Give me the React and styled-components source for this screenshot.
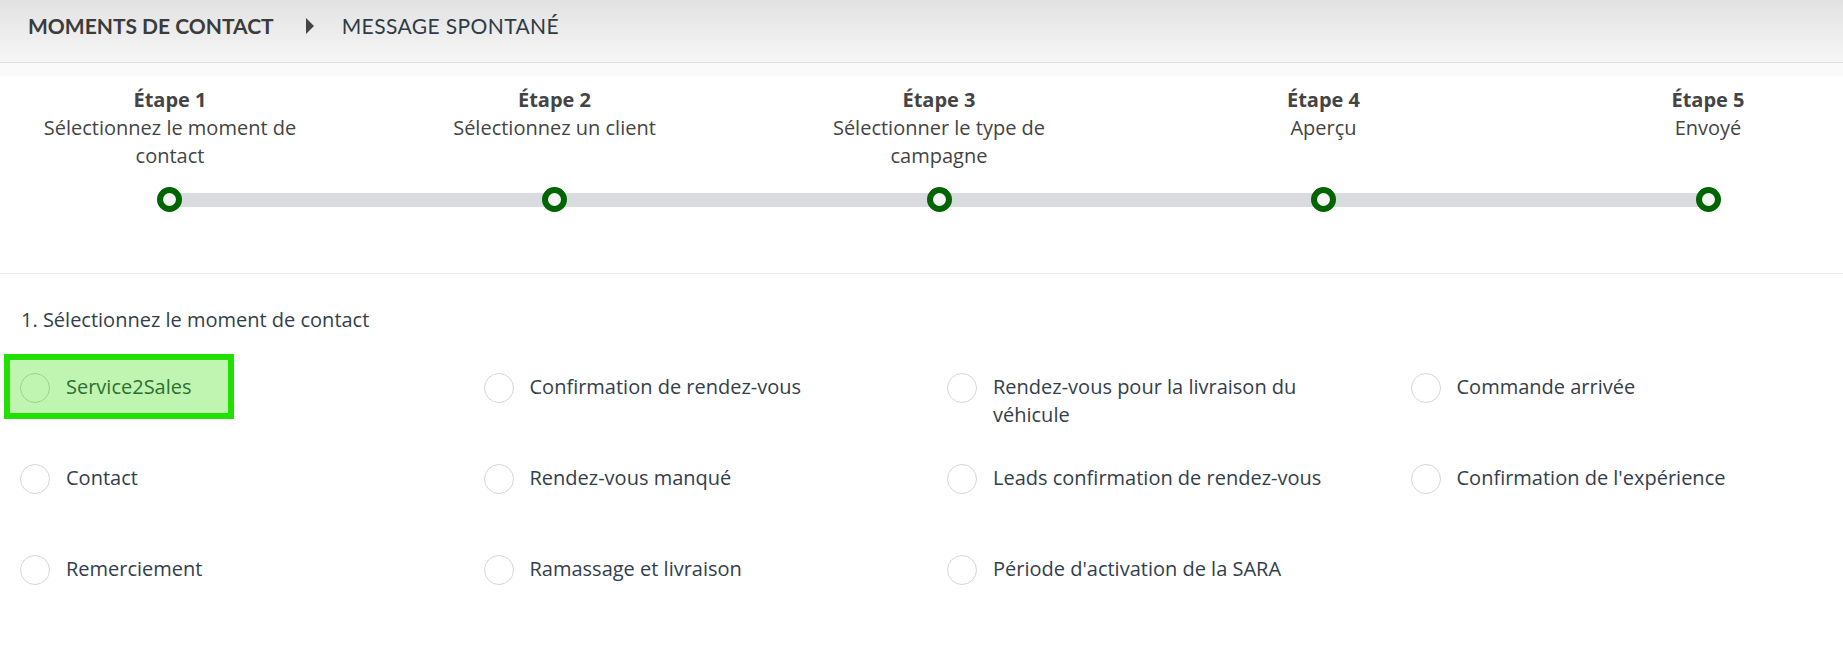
import React from 'react';
import styled, { createGlobalStyle } from 'styled-components';

// Colors
const colors = {
  text: '#444444',
  slate: '#333e4b',
  headerTop: '#e2e2e2',
  headerBottom: '#f6f6f6',
  headerBorder: '#dcdcdc',
  divider: '#ececec',
  track: '#d8dcdf',
  dot: '#006400',
  dotFill: '#f5f5f5',
  radioBorder: '#d6d6d6',
  highlight: '#22e000',
  highlightFill: '#bff5b0',
  highlightText: '#2e6e34'
};

const GlobalStyle = createGlobalStyle`
  html, body {
    margin: 0;
    padding: 0;
    background: #ffffff;
  }
  body {
    font-family: "Open Sans", "Liberation Sans", sans-serif;
    color: ${colors.text};
  }
  * {
    box-sizing: border-box;
  }
`;

const Page = styled.div`
  width: 1843px;
  min-height: 649px;
  overflow: hidden;
`;

const Header = styled.header`
  height: 63px;
  display: flex;
  align-items: center;
  padding: 0 0 11px 28px;
  background: linear-gradient(to bottom, ${colors.headerTop}, ${colors.headerBottom});
  border-bottom: 1px solid ${colors.headerBorder};
  font-family: Lato, "Open Sans", sans-serif;
  font-size: 21px;
  text-transform: uppercase;
`;

const Crumb = styled.span`
  color: ${(p) => (p.$current ? '#2f3a46' : '#3b3b3b')};
  font-weight: ${(p) => (p.$current ? 400 : 700)};
  letter-spacing: ${(p) => (p.$current ? '0.4px' : '0')};
`;

const CrumbCaret = styled.svg`
  width: 8px;
  height: 16px;
  margin: 0 28px 0 32px;
  fill: #444444;
`;

const StepperSection = styled.section`
  padding: 23px 0 61px;
  background: linear-gradient(to bottom, #fafafa 0, #fafafa 13px, #ffffff 13px);
  border-bottom: 1px solid ${colors.divider};
`;

const StepLabels = styled.div`
  display: flex;
  justify-content: space-between;
  align-items: flex-start;
  padding-left: 35px;
`;

const StepLabel = styled.div`
  width: 270px;
  text-align: center;
  font-size: 20px;
  line-height: 28px;
  color: ${colors.text};
`;

const StepNumber = styled.div`
  font-weight: 700;
`;

const Track = styled.div`
  margin: 17px 122px 0 157px;
  height: 25px;
  display: flex;
  justify-content: space-between;
  align-items: center;
  background: linear-gradient(${colors.track}, ${colors.track}) center / calc(100% - 25px) 14px no-repeat;
`;

const Dot = styled.span`
  width: 25px;
  height: 25px;
  border-radius: 50%;
  border: 6px solid ${colors.dot};
  background: ${colors.dotFill};
`;

const ChoiceSection = styled.section`
  padding: 32px 0 0 0;
`;

const SectionTitle = styled.h2`
  margin: 0 0 20px 21px;
  font-size: 20px;
  line-height: 28px;
  font-weight: 400;
  color: ${colors.slate};
`;

const OptionGrid = styled.div`
  display: grid;
  grid-template-columns: repeat(4, 463.5px);
  grid-auto-rows: 91px;
  align-items: start;
  margin-left: 4px;
`;

const Option = styled.label`
  display: flex;
  align-items: flex-start;
  gap: 16px;
  width: ${(p) => (p.$highlighted ? '230px' : 'auto')};
  padding: 13px 10px 10px;
  border: 6px solid ${(p) => (p.$highlighted ? colors.highlight : 'transparent')};
  background: ${(p) => (p.$highlighted ? colors.highlightFill : 'transparent')};
  color: ${(p) => (p.$highlighted ? colors.highlightText : colors.slate)};
  cursor: pointer;
`;

const Radio = styled.span`
  flex: 0 0 30px;
  height: 30px;
  border-radius: 50%;
  border: 1px solid ${(p) => (p.$highlighted ? '#9fcf94' : colors.radioBorder)};
  background: transparent;
`;

const OptionText = styled.span`
  max-width: 345px;
  font-size: 20px;
  line-height: 28px;
`;

const steps = [
  { number: 'Étape 1', label: 'Sélectionnez le moment de contact' },
  { number: 'Étape 2', label: 'Sélectionnez un client' },
  { number: 'Étape 3', label: 'Sélectionner le type de campagne' },
  { number: 'Étape 4', label: 'Aperçu' },
  { number: 'Étape 5', label: 'Envoyé' }
];

const moments = [
  'Service2Sales',
  'Confirmation de rendez-vous',
  'Rendez-vous pour la livraison du véhicule',
  'Commande arrivée',
  'Contact',
  'Rendez-vous manqué',
  'Leads confirmation de rendez-vous',
  "Confirmation de l'expérience",
  'Remerciement',
  'Ramassage et livraison',
  "Période d'activation de la SARA"
];

const App = () => {
  return (
    <Page>
      <GlobalStyle />
      <Header>
        <Crumb>Moments de contact</Crumb>
        <CrumbCaret viewBox="0 0 8 16">
          <polygon points="0,0 8,8 0,16" />
        </CrumbCaret>
        <Crumb $current>Message spontané</Crumb>
      </Header>

      <StepperSection>
        <StepLabels>
          {steps.map((step) => (
            <StepLabel key={step.number}>
              <StepNumber>{step.number}</StepNumber>
              {step.label}
            </StepLabel>
          ))}
        </StepLabels>
        <Track>
          {steps.map((step) => (
            <Dot key={step.number} />
          ))}
        </Track>
      </StepperSection>

      <ChoiceSection>
        <SectionTitle>1. Sélectionnez le moment de contact</SectionTitle>
        <OptionGrid>
          {moments.map((moment, i) => (
            <div key={moment}>
              <Option $highlighted={i === 0}>
                <Radio $highlighted={i === 0} />
                <OptionText>{moment}</OptionText>
              </Option>
            </div>
          ))}
        </OptionGrid>
      </ChoiceSection>
    </Page>
  );
};

export default App;
